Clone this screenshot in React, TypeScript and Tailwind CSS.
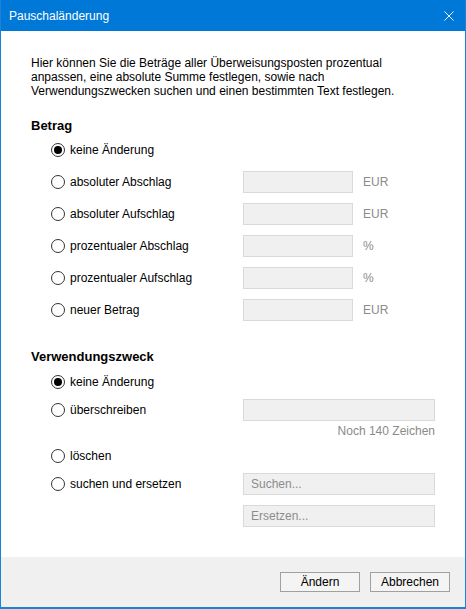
import React from 'react';

const font = { fontFamily: '"Liberation Sans", Arial, sans-serif' };

function Radio({ checked, label }: { checked?: boolean; label: string }) {
  return (
    <div className="flex items-center gap-[5px] w-[192px] shrink-0">
      <span className="w-[14px] h-[14px] rounded-full border border-[#333333] bg-white flex items-center justify-center shrink-0">
        {checked && <span className="w-[8px] h-[8px] rounded-full bg-black" />}
      </span>
      <span className="text-[12px] text-black">{label}</span>
    </div>
  );
}

function Field({ w, placeholder }: { w: string; placeholder?: string }) {
  return (
    <div className={`${w} h-[22px] border border-[#d9d9d9] bg-[#f0f0f0] px-[7px] flex items-center text-[12px] text-[#8c8c8c]`}>
      {placeholder}
    </div>
  );
}

function AmountRow({ label, unit, checked }: { label: string; unit?: string; checked?: boolean }) {
  return (
    <div className="h-[22px] flex items-center">
      <Radio label={label} checked={checked} />
      {unit && (
        <>
          <div className="w-[110px] h-[22px] border border-[#d9d9d9] bg-[#f0f0f0]" />
          <span className="ml-[10px] text-[12px] text-[#8a8a8a]">{unit}</span>
        </>
      )}
    </div>
  );
}

export default function App() {
  return (
    <div
      className="w-[466px] h-[609px] flex flex-col border-x border-b-2 border-[#1883d7] bg-white"
      style={font}
    >
      {/* Title bar */}
      <div className="h-[31px] bg-[#0078d7] flex items-center justify-between pl-[8px] pr-[11px] shrink-0">
        <span className="text-[12px] text-white">Pauschaländerung</span>
        <svg width="10" height="10" viewBox="0 0 10 10">
          <path d="M0.5 0.5 L9.5 9.5 M9.5 0.5 L0.5 9.5" stroke="white" strokeWidth="1" />
        </svg>
      </div>

      {/* Body */}
      <div className="flex-1 bg-white pt-[25px] px-[30px]">
        <p className="text-[12px] leading-[14px] text-black">
          Hier können Sie die Beträge aller Überweisungsposten prozentual
          <br />
          anpassen, eine absolute Summe festlegen, sowie nach
          <br />
          Verwendungszwecken suchen und einen bestimmten Text festlegen.
        </p>

        <h2 className="mt-[20px] text-[13px] leading-[16px] font-bold text-black">Betrag</h2>
        <div className="mt-[5px] pl-[20px] flex flex-col gap-[10px]">
          <AmountRow label="keine Änderung" checked />
          <AmountRow label="absoluter Abschlag" unit="EUR" />
          <AmountRow label="absoluter Aufschlag" unit="EUR" />
          <AmountRow label="prozentualer Abschlag" unit="%" />
          <AmountRow label="prozentualer Aufschlag" unit="%" />
          <AmountRow label="neuer Betrag" unit="EUR" />
        </div>

        <h2 className="mt-[28px] text-[13px] leading-[16px] font-bold text-black">Verwendungszweck</h2>
        <div className="pl-[20px] flex flex-col">
          <div className="mt-[6px] h-[22px] flex items-center">
            <Radio label="keine Änderung" checked />
          </div>
          <div className="mt-[6px] h-[22px] flex items-center">
            <Radio label="überschreiben" />
            <Field w="w-[192px]" />
          </div>
          <div className="mt-[3px] w-[384px] text-right text-[12px] leading-[14px] text-[#8a8a8a]">
            Noch 140 Zeichen
          </div>
          <div className="mt-[7px] h-[22px] flex items-center">
            <Radio label="löschen" />
          </div>
          <div className="mt-[6px] h-[22px] flex items-center">
            <Radio label="suchen und ersetzen" />
            <Field w="w-[192px]" placeholder="Suchen..." />
          </div>
          <div className="mt-[10px] h-[22px] flex items-center pl-[192px]">
            <Field w="w-[192px]" placeholder="Ersetzen..." />
          </div>
        </div>
      </div>

      {/* Footer */}
      <div className="h-[50px] shrink-0 bg-[#f0f0f0] flex items-center justify-end gap-[10px] pr-[15px]">
        <button className="w-[80px] h-[20px] border border-[#a0a0a0] bg-[#f4f4f4] text-[12px] text-black">
          Ändern
        </button>
        <button className="w-[80px] h-[20px] border border-[#a0a0a0] bg-[#f4f4f4] text-[12px] text-black">
          Abbrechen
        </button>
      </div>
    </div>
  );
}
